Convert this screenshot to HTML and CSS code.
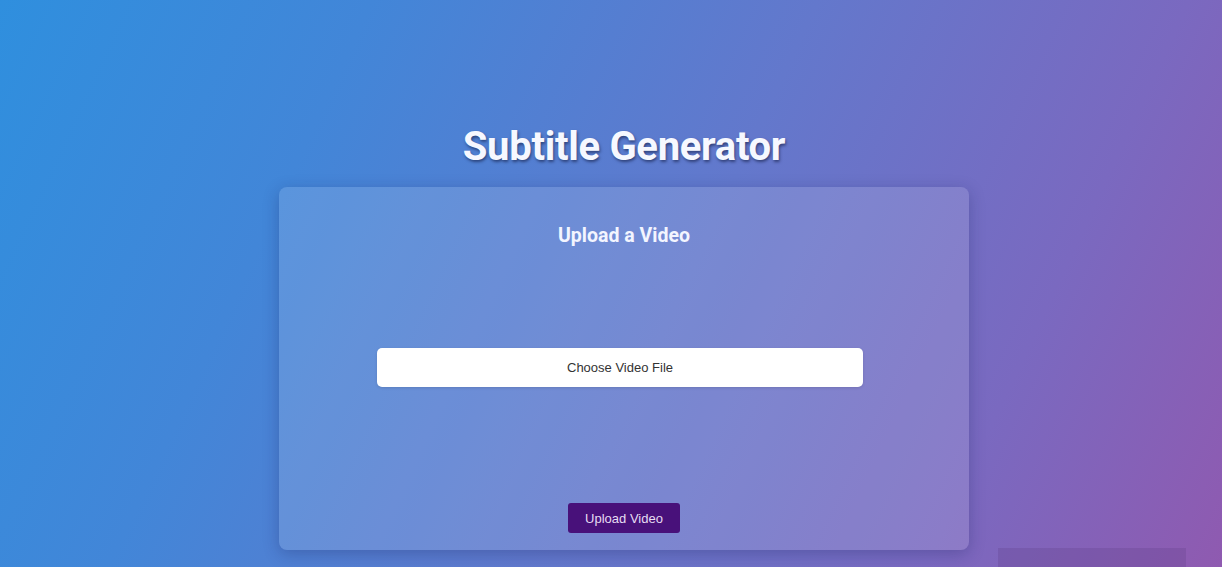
FILE: index.html
```html
<!DOCTYPE html>
<html lang="en">
<head>
<meta charset="utf-8">
<title>Subtitle Generator</title>
<link rel="stylesheet" href="styles.css">
</head>
<body>
  <main class="page">
    <h1 class="title">Subtitle Generator</h1>
    <section class="card">
      <h2 class="card-title">Upload a Video</h2>
      <div class="file-row">
        <label class="file-btn">Choose Video File<input type="file" accept="video/*" class="file-input"></label>
      </div>
      <div class="actions">
        <button class="upload-btn" type="button">Upload Video</button>
      </div>
    </section>
  </main>
  <div class="player-bar"></div>
</body>
</html>
```
FILE: styles.css
```css
* { box-sizing: border-box; }
html, body { height: 100%; }
body {
  margin: 0;
  overflow: hidden;
  font-family: Roboto, "Liberation Sans", Arial, sans-serif;
  background: linear-gradient(115deg, #2f8fde 0%, #4286d8 25%, #6378cc 55%, #7a69c0 80%, #8f5ab0 100%);
  color: #fff;
  position: relative;
}
.page {
  display: flex;
  flex-direction: column;
  align-items: center;
  padding-top: 123px;
  padding-left: 26px;
}
.title {
  margin: 0;
  font-size: 40px;
  font-weight: 700;
  line-height: 48px;
  letter-spacing: -0.3px;
  color: #f6f8ff;
  text-shadow: 1px 2px 3px rgba(20, 30, 70, 0.6);
}
.card {
  margin-top: 16px;
  width: 690px;
  height: 363px;
  border-radius: 8px;
  background: rgba(255, 255, 255, 0.13);
  box-shadow: 0 4px 16px rgba(20, 30, 90, 0.28);
  display: flex;
  flex-direction: column;
  align-items: center;
  padding: 37px 0 17px;
}
.card-title {
  margin: 0;
  font-size: 19.5px;
  font-weight: 700;
  line-height: 24px;
  color: #f3f5ff;
}
.file-row {
  margin-top: 100px;
  display: flex;
  justify-content: center;
  width: 100%;
}
.file-btn {
  width: 486px;
  height: 39px;
  margin-right: 8px;
  background: #fff;
  border-radius: 5px;
  display: flex;
  align-items: center;
  justify-content: center;
  font-family: "Liberation Sans", Arial, sans-serif;
  font-size: 13px;
  color: #333;
  box-shadow: 0 1px 3px rgba(0, 0, 0, 0.12);
  cursor: pointer;
}
.file-input { display: none; }
.actions {
  margin-top: auto;
  display: flex;
  justify-content: center;
}
.upload-btn {
  width: 112px;
  height: 30px;
  border: none;
  border-radius: 3px;
  background: #48117a;
  color: #e6dcf2;
  font-family: "Liberation Sans", Arial, sans-serif;
  font-size: 13px;
  cursor: pointer;
}
.player-bar {
  position: absolute;
  left: 998px;
  bottom: 0;
  width: 188px;
  height: 19px;
  background: rgba(90, 60, 130, 0.25);
}
```
